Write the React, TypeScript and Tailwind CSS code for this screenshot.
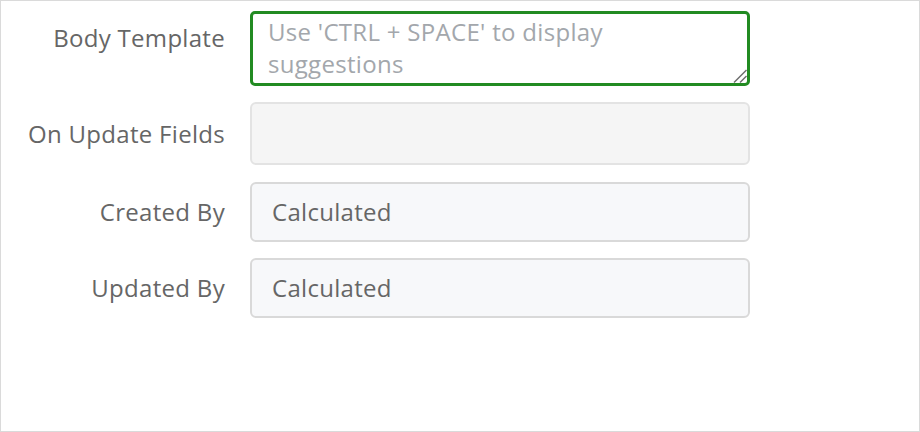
export default function App() {
  const label = "w-[224px] shrink-0 text-right text-[24px] tracking-[0.3px] text-[#666666]";
  return (
    <div
      className="w-[920px] h-[432px] bg-white border border-[#dadada] flex flex-col"
      style={{ fontFamily: "'Open Sans', Lato, sans-serif" }}
    >
      <div className="flex flex-col pt-[10px]">
        <div className="flex items-start gap-[25px]">
          <div className={label + " pt-[11px] leading-[32px]"}>Body Template</div>
          <div className="relative">
            <textarea
              className="block w-[500px] h-[75px] resize-none rounded-[5px] border-[3px] border-[#228b22] bg-white pl-[15px] pr-[20px] pt-[2px] text-[24px] tracking-[0.3px] leading-[32px] text-[#666666] outline-none placeholder:text-[#a3a7ac]"
              placeholder="Use 'CTRL + SPACE' to display suggestions"
            />
            <svg
              className="absolute right-[3px] bottom-[3px] pointer-events-none"
              width="14"
              height="14"
              viewBox="0 0 14 14"
            >
              <line x1="1" y1="13.5" x2="13.5" y2="1" stroke="#6b6b6b" strokeWidth="1.4" />
              <line x1="7" y1="13.5" x2="13.5" y2="7" stroke="#6b6b6b" strokeWidth="1.4" />
            </svg>
          </div>
        </div>
        <div className="flex items-center gap-[25px] mt-[16px]">
          <div className={label}>On Update Fields</div>
          <div className="w-[500px] h-[63px] rounded-[6px] border-2 border-[#e3e3e3] bg-[#f5f5f5]" />
        </div>
        <div className="flex items-center gap-[25px] mt-[17px]">
          <div className={label}>Created By</div>
          <div className="w-[500px] h-[60px] rounded-[6px] border-2 border-[#d9d9d9] bg-[#f7f8fa] flex items-center px-[20px] text-[24px] tracking-[0.3px] text-[#666666]">
            Calculated
          </div>
        </div>
        <div className="flex items-center gap-[25px] mt-[16px]">
          <div className={label}>Updated By</div>
          <div className="w-[500px] h-[60px] rounded-[6px] border-2 border-[#d9d9d9] bg-[#f7f8fa] flex items-center px-[20px] text-[24px] tracking-[0.3px] text-[#666666]">
            Calculated
          </div>
        </div>
      </div>
    </div>
  );
}
